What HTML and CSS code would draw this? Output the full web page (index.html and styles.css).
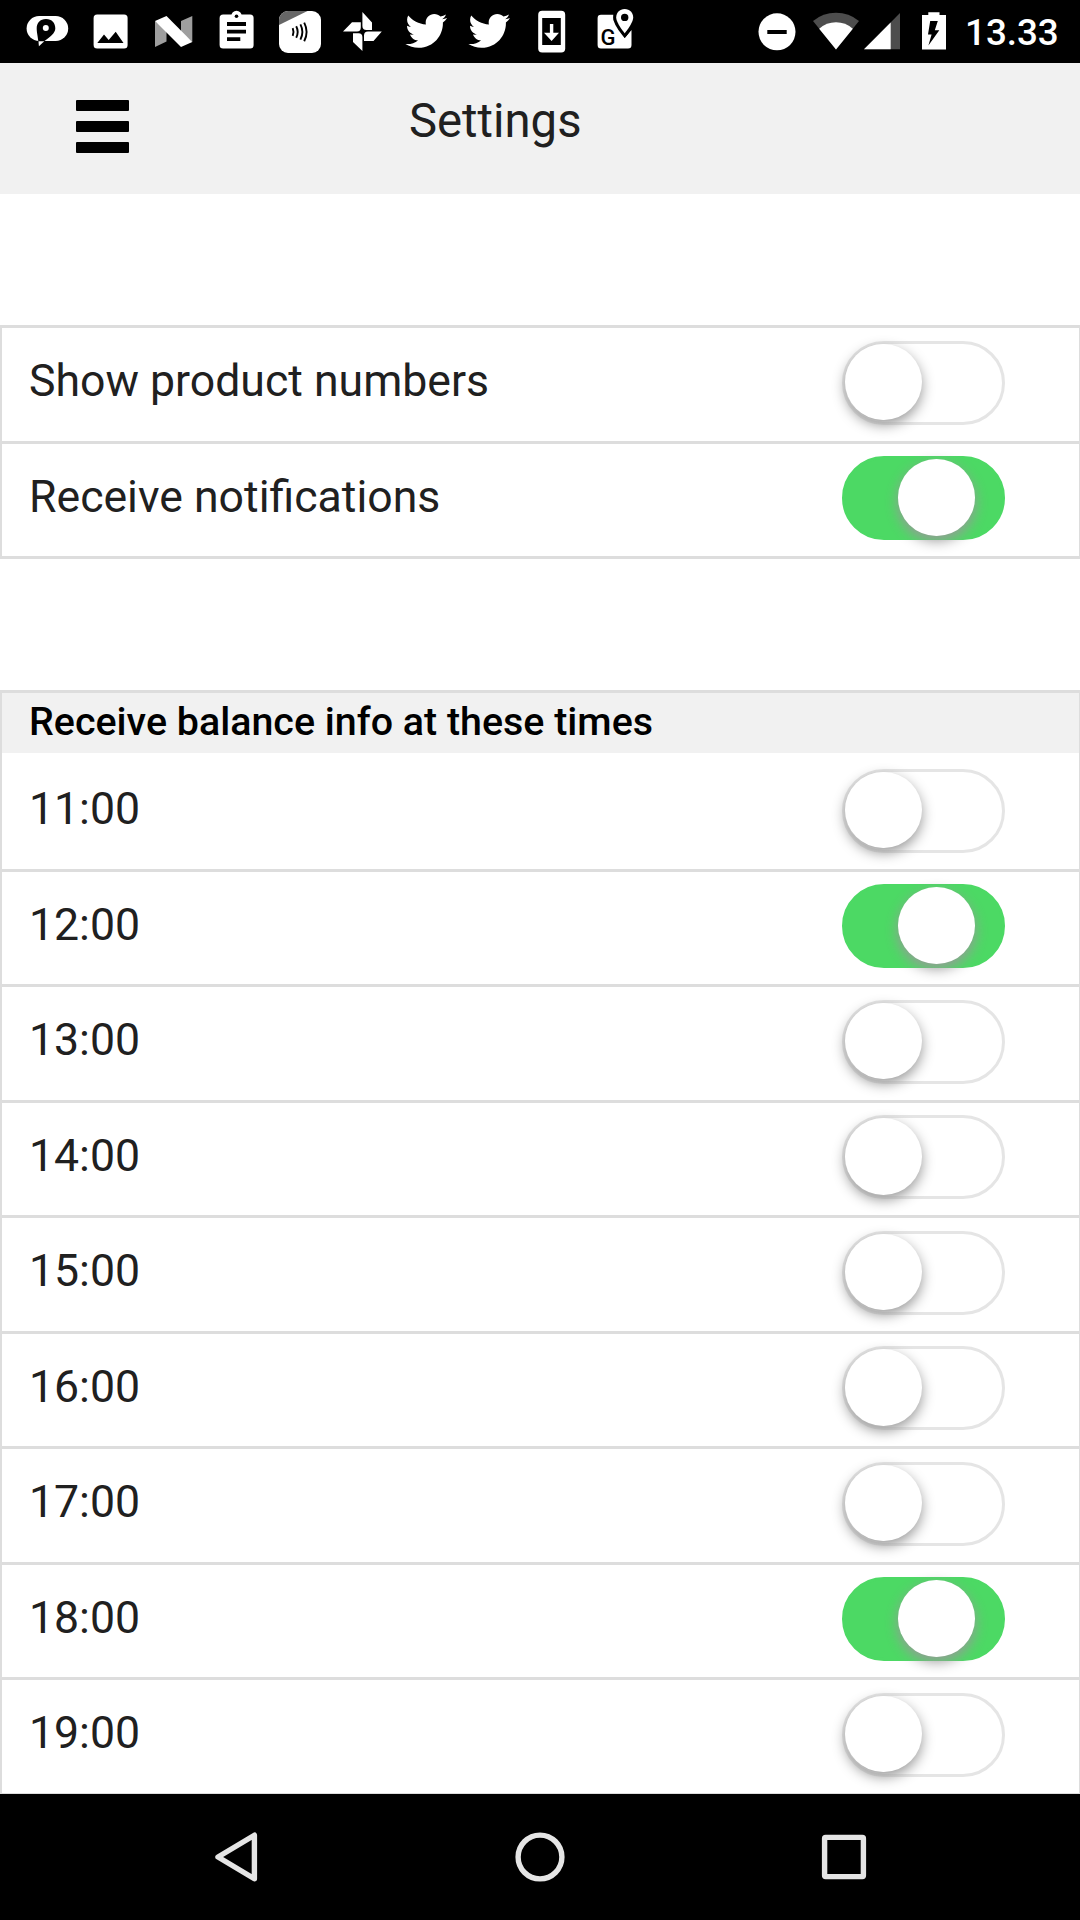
FILE: index.html
```html
<!DOCTYPE html>
<html lang="en">
<head>
    <meta charset="UTF-8">
    <meta name="viewport" content="width=device-width, initial-scale=1.0">
    <title>Settings</title>
    <link rel="stylesheet" href="styles.css">
</head>
<body>
    <!-- Status bar -->
    <div class="status-bar">
        <div class="notifications">
            <svg viewBox="0 0 63 63">
                <rect x="10.6" y="16" width="41.6" height="25" rx="12.5" fill="#fff"/>
                <path d="M22.3 41C21.5 35 20.7 32 20.7 28.5C20.7 23 24 19 30 19S39.3 23 39.3 28.5C39.3 33 34 37 28.5 41Z" fill="#000"/>
                <path d="M22.5 41.3H28.3L22.9 46.3Z" fill="#fff"/>
                <circle cx="29.8" cy="28" r="3" fill="#fff"/>
            </svg>
            <svg viewBox="0 0 63 63">
                <rect x="14.6" y="14.5" width="34" height="34" rx="3.5" fill="#fff"/>
                <path d="M18.3 43L25 34.5L29.7 40L36.7 31.7L44.5 43Z" fill="#000"/>
            </svg>
            <svg viewBox="0 0 63 63">
                <path d="M13 21L24.5 30V41.5L13 47ZM39 21L50.3 16V42L39 33Z" fill="#9e9e9e"/>
                <path d="M13 21L24.5 16L50.3 42L39 47Z" fill="#fff"/>
            </svg>
            <svg viewBox="0 0 63 63">
                <rect x="14.6" y="14.5" width="34" height="34" rx="3.5" fill="#fff"/>
                <circle cx="31.5" cy="16" r="5.2" fill="#fff"/>
                <circle cx="31.5" cy="16.3" r="1.8" fill="#000"/>
                <path d="M22 22H41V26H22ZM22 29.8H41V33.6H22ZM22 37.3H35.3V41H22Z" fill="#000"/>
            </svg>
            <svg viewBox="0 0 63 63">
                <rect x="11" y="11" width="42" height="42" rx="9" fill="#fff"/>
                <path d="M11 25V20A9 9 0 0 1 20 11H39.5Z" fill="#666"/>
                <path d="M24.7 28.2Q26.3 32 24.7 35.8M28.2 26.3Q31.2 32 28.2 37.7M32.4 24.4Q36.4 32 32.4 39.6M36.2 22.6Q41 32 36.2 41.2" fill="none" stroke="#000" stroke-width="1.9"/>
            </svg>
            <svg viewBox="0 0 63 63">
                <path d="M31.4 12L41 22.5V30H35.5Q31.4 30 31.4 26ZM12 31.6L21 22.2H29.8V27.5Q29.8 31.6 26 31.6ZM22 33.2H27.5Q31.4 33.2 31.4 37V51L22 42ZM33 41V35.6Q33 31.6 37 31.6H50.8L42.5 41Z" fill="#fff"/>
            </svg>
            <svg viewBox="0 0 63 63">
                <path transform="translate(11.4 10) scale(1.74)" d="M23.954 4.569c-.885.389-1.83.654-2.825.775 1.014-.611 1.794-1.574 2.163-2.723-.951.555-2.005.959-3.127 1.184-.896-.959-2.173-1.559-3.591-1.559-2.717 0-4.92 2.203-4.92 4.917 0 .39.045.765.127 1.124C7.691 8.094 4.066 6.13 1.64 3.161c-.427.722-.666 1.561-.666 2.475 0 1.71.87 3.213 2.188 4.096-.807-.026-1.566-.248-2.228-.616v.061c0 2.385 1.693 4.374 3.946 4.827-.413.111-.849.171-1.296.171-.314 0-.615-.03-.916-.086.631 1.953 2.445 3.377 4.604 3.417-1.68 1.319-3.809 2.105-6.102 2.105-.39 0-.779-.023-1.17-.067 2.189 1.394 4.768 2.209 7.557 2.209 9.054 0 13.999-7.496 13.999-13.986 0-.209 0-.42-.015-.63.961-.689 1.8-1.56 2.46-2.548l-.047-.02z" fill="#fff"/>
            </svg>
            <svg viewBox="0 0 63 63">
                <path transform="translate(11.4 10) scale(1.74)" d="M23.954 4.569c-.885.389-1.83.654-2.825.775 1.014-.611 1.794-1.574 2.163-2.723-.951.555-2.005.959-3.127 1.184-.896-.959-2.173-1.559-3.591-1.559-2.717 0-4.92 2.203-4.92 4.917 0 .39.045.765.127 1.124C7.691 8.094 4.066 6.13 1.64 3.161c-.427.722-.666 1.561-.666 2.475 0 1.71.87 3.213 2.188 4.096-.807-.026-1.566-.248-2.228-.616v.061c0 2.385 1.693 4.374 3.946 4.827-.413.111-.849.171-1.296.171-.314 0-.615-.03-.916-.086.631 1.953 2.445 3.377 4.604 3.417-1.68 1.319-3.809 2.105-6.102 2.105-.39 0-.779-.023-1.17-.067 2.189 1.394 4.768 2.209 7.557 2.209 9.054 0 13.999-7.496 13.999-13.986 0-.209 0-.42-.015-.63.961-.689 1.8-1.56 2.46-2.548l-.047-.02z" fill="#fff"/>
            </svg>
            <svg viewBox="0 0 63 63">
                <rect x="18.2" y="10.8" width="27" height="41.6" rx="4" fill="#fff"/>
                <rect x="22.2" y="18" width="18.6" height="27" fill="#000"/>
                <path d="M29.9 24H33.3V32.8H39L31.6 41L24 32.8H29.9Z" fill="#fff"/>
            </svg>
            <svg viewBox="0 0 63 63">
                <path d="M18 14.8H30.5V20L41.7 38L48.5 30V45Q48.5 48.5 45 48.5H18Q14.6 48.5 14.6 45V18.2Q14.6 14.8 18 14.8Z" fill="#fff"/>
                <path d="M41.7 9C36.5 9 33.2 12.8 33.2 17.5C33.2 23 41.7 33.3 41.7 33.3S50.2 23 50.2 17.5C50.2 12.8 46.8 9 41.7 9Z" fill="#fff" stroke="#000" stroke-width="6" paint-order="stroke"/>
                <circle cx="41.7" cy="17.4" r="3.7" fill="#000"/>
                <text x="17.6" y="44.8" class="map-letter">G</text>
            </svg>
        </div>
        <div class="system">
            <svg class="dnd" viewBox="0 0 38 63">
                <circle cx="19" cy="31.8" r="18.5" fill="#fff"/>
                <rect x="9.3" y="30" width="19.4" height="4" fill="#000"/>
            </svg>
            <svg class="wifi" viewBox="0 0 46 63">
                <path d="M0 21Q10 12.8 23 12.8T46 21L23 49.5Z" fill="#4d4d4d"/>
                <path d="M6.2 28.7Q13.5 22.3 23 22.3T39.8 28.7L23 49.5Z" fill="#fff"/>
            </svg>
            <svg class="signal" viewBox="0 0 36 63">
                <path d="M0 49.3H36.5V12.6Z" fill="#4d4d4d"/>
                <path d="M0 49.3H26.7V22.5Z" fill="#fff"/>
            </svg>
            <svg class="battery" viewBox="0 0 24 63">
                <path d="M0 15H6.3V12.2H17.5V15H24V49.6H0Z" fill="#fff"/>
                <path d="M8.2 21H15.8L12.8 30.3H17.3L6.4 45.5L9.6 34.6H6Z" fill="#000"/>
            </svg>
            <span class="clock">13.33</span>
        </div>
    </div>

    <!-- Header -->
    <div class="header">
        <div class="menu-button">
            <span></span>
            <span></span>
            <span></span>
        </div>
        <h1>Settings</h1>
    </div>

    <!-- Settings -->
    <div class="content">
        <div class="group">
            <div class="row">Show product numbers<div class="toggle"></div></div>
            <div class="row">Receive notifications<div class="toggle on"></div></div>
        </div>

        <div class="group times">
            <h2>Receive balance info at these times</h2>
            <div class="row">11:00<div class="toggle"></div></div>
            <div class="row">12:00<div class="toggle on"></div></div>
            <div class="row">13:00<div class="toggle"></div></div>
            <div class="row">14:00<div class="toggle"></div></div>
            <div class="row">15:00<div class="toggle"></div></div>
            <div class="row">16:00<div class="toggle"></div></div>
            <div class="row">17:00<div class="toggle"></div></div>
            <div class="row">18:00<div class="toggle on"></div></div>
            <div class="row">19:00<div class="toggle"></div></div>
        </div>
    </div>

    <!-- Navigation bar -->
    <div class="nav-bar">
        <svg viewBox="0 0 60 60">
            <path d="M48.4 8.2V51.8L12 30Z"/>
        </svg>
        <svg viewBox="0 0 60 60">
            <circle cx="30" cy="30" r="21.9"/>
        </svg>
        <svg viewBox="0 0 60 60">
            <rect x="10.6" y="10.4" width="38.8" height="39.2" rx="1"/>
        </svg>
    </div>
</body>
</html>
```
FILE: styles.css
```css
* {
    box-sizing: border-box;
}
body {
    font-family: Roboto, sans-serif;
    margin: 0;
    height: 1920px;
    display: flex;
    flex-direction: column;
    overflow: hidden;
    background: white;
    color: #202020;
}
svg {
    display: block;
    flex: none;
}
.status-bar {
    display: flex;
    justify-content: space-between;
    flex: none;
    height: 63px;
    padding: 0 22px 0 16px;
    background: black;
}
.notifications {
    display: flex;
}
.notifications svg {
    width: 63px;
    height: 63px;
}
.map-letter {
    font-size: 22px;
    font-weight: 500;
    fill: black;
}
.system {
    display: flex;
}
.system svg {
    height: 63px;
}
.dnd {
    width: 38px;
    margin-right: 17px;
}
.wifi {
    width: 46px;
    margin-right: 5px;
}
.signal {
    width: 36px;
    margin-right: 22px;
}
.battery {
    width: 24px;
    margin-right: 19px;
}
.clock {
    width: 93px;
    color: white;
    font-size: 36.75px;
    font-weight: 500;
    line-height: 66px;
}
.header {
    display: flex;
    flex: none;
    height: 131px;
    background: #f1f1f1;
}
.menu-button {
    display: flex;
    flex-direction: column;
    gap: 10px;
    width: 52.5px;
    margin: 37.4px 280.5px 0 76px;
}
.menu-button span {
    height: 11px;
    border-radius: 1px;
    background: black;
}
.header h1 {
    margin: 30px 0 0;
    font-size: 47.25px;
    font-weight: 400;
    line-height: 56px;
}
.content {
    flex: 1;
    min-height: 0;
    padding-top: 131px;
    overflow: hidden;
}
.group {
    border: solid #ddd;
    border-width: 0 1px 3px 2px;
    margin-bottom: 131px;
}
.times {
    border-top-width: 3px;
}
.group h2 {
    height: 60px;
    margin: 0;
    padding-left: 27px;
    background: #f1f1f1;
    color: black;
    font-size: 39.4px;
    font-weight: 500;
    line-height: 58px;
}
.row {
    display: flex;
    justify-content: space-between;
    height: 115.5px;
    padding: 0 74px 0 27px;
    border-top: 3px solid #ddd;
    font-size: 44.6px;
    line-height: 107px;
}
.times h2 + .row {
    border-top-color: transparent;
}
.toggle {
    width: 162.6px;
    height: 84px;
    margin-top: 12.6px;
    border: 3px solid #e5e5e5;
    border-radius: 42px;
}
.toggle::before {
    content: "";
    display: block;
    width: 76.6px;
    height: 76.6px;
    border-radius: 50%;
    background: white;
    box-shadow: 0 5px 13px #999;
}
.toggle.on {
    border-color: #4cd964;
    background: #4cd964;
}
.toggle.on::before {
    margin-left: 52.5px;
}
.nav-bar {
    display: flex;
    justify-content: space-between;
    flex: none;
    height: 126px;
    padding: 33px 206px 33px 206px;
    background: black;
}
.nav-bar svg {
    width: 60px;
    height: 60px;
    fill: none;
    stroke: #e5e5e5;
    stroke-width: 5.4;
    stroke-linejoin: round;
}
```
